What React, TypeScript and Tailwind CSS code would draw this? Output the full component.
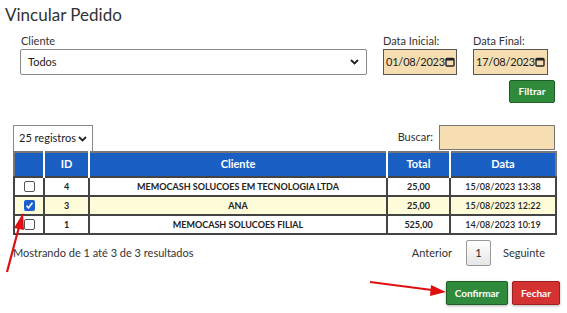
import React from "react";

const rows = [
  { id: 4, cliente: "MEMOCASH SOLUCOES EM TECNOLOGIA LTDA", total: "25,00", data: "15/08/2023 13:38", checked: false },
  { id: 3, cliente: "ANA", total: "25,00", data: "15/08/2023 12:22", checked: true },
  { id: 1, cliente: "MEMOCASH SOLUCOES FILIAL", total: "525,00", data: "14/08/2023 10:19", checked: false },
];

function Chevron() {
  return (
    <svg width="9" height="6" viewBox="0 0 9 6" className="shrink-0">
      <path d="M1 1l3.5 3.5L8 1" stroke="#222" strokeWidth="1.8" fill="none" />
    </svg>
  );
}

function CalIcon() {
  return (
    <svg width="10" height="10" viewBox="0 0 10 10" className="shrink-0">
      <rect x="1" y="1.5" width="8" height="7.5" rx="1" stroke="#222" strokeWidth="1.4" fill="none" />
      <rect x="1" y="1.5" width="8" height="2" fill="#222" />
    </svg>
  );
}

function DateField({ label, value, width }: { label: string; value: string; width: string }) {
  return (
    <div className="flex flex-col">
      <span className="text-[11px] text-[#333] leading-[13px] mb-[2px]">{label}</span>
      <div className={`${width} h-[26px] bg-[#f6deb2] border border-[#555] flex items-center justify-between pl-[2px] pr-[3px] text-[11px] text-[#222] whitespace-nowrap`}>
        <span className="tracking-[-0.2px]">{value}</span>
        <CalIcon />
      </div>
    </div>
  );
}

function Box({ checked }: { checked: boolean }) {
  return checked ? (
    <span className="inline-flex w-[11px] h-[11px] bg-[#1a5fd0] rounded-[2px] items-center justify-center">
      <svg width="9" height="9" viewBox="0 0 9 9">
        <path d="M1.5 4.8l2 2 4-5" stroke="#fff" strokeWidth="1.6" fill="none" />
      </svg>
    </span>
  ) : (
    <span className="inline-block w-[11px] h-[11px] bg-white border border-[#555] rounded-[2px]" />
  );
}

export default function App() {
  return (
    <div className="relative w-[567px] h-[313px] bg-white overflow-hidden text-[#222]" style={{ fontFamily: "Lato, 'Noto Sans', sans-serif" }}>
      <h1 className="pl-[5px] pt-[4px] text-[17px] leading-[22px] text-[#333]">Vincular Pedido</h1>

      {/* filters */}
      <div className="flex items-end gap-[16px] ml-[20px] mt-[8px]">
        <div className="flex flex-col">
          <span className="text-[11px] text-[#333] leading-[13px] mb-[2px] pl-[1px]">Cliente</span>
          <div className="w-[347px] h-[26px] border border-[#888] rounded-[2px] flex items-center justify-between pl-[7px] pr-[7px] text-[11px]">
            <span>Todos</span>
            <Chevron />
          </div>
        </div>
        <DateField label="Data Inicial:" value="01/08/2023" width="w-[74px]" />
        <DateField label="Data Final:" value="17/08/2023" width="w-[75px]" />
      </div>

      <div className="flex justify-end pr-[12px] mt-[5px]">
        <button className="w-[46px] h-[23px] bg-[#2f8a3c] border border-[#1e5e27] rounded-[2px] text-white text-[10px] font-bold">Filtrar</button>
      </div>

      {/* controls */}
      <div className="flex items-end justify-between ml-[13px] mr-[12px] mt-[22px]">
        <div className="w-[80px] h-[26px] border border-[#888] border-b-0 flex items-center justify-between px-[5px] text-[11px] whitespace-nowrap">
          <span>25 registros</span>
          <Chevron />
        </div>
        <div className="flex items-center gap-[6px] mb-[1px]">
          <span className="text-[11px] text-[#333]">Buscar:</span>
          <div className="w-[116px] h-[25px] bg-[#f6deb2] border border-[#777]" />
        </div>
      </div>

      {/* table */}
      <table className="ml-[13px] w-[544px] border-collapse border-2 border-[#777] text-[9px] font-bold">
        <thead>
          <tr className="bg-[#1a5fc4] text-white text-[11px] h-[25px]">
            <th className="w-[30px] border-r-2 border-white" />
            <th className="w-[45px] border-r-2 border-white">ID</th>
            <th className="w-[298px] border-r-2 border-white">Cliente</th>
            <th className="w-[63px] border-r-2 border-white">Total</th>
            <th>Data</th>
          </tr>
        </thead>
        <tbody>
          {rows.map((r) => (
            <tr key={r.id} className={`h-[19px] ${r.checked ? "bg-[#fdfbd8]" : "bg-white"}`}>
              <td className="border-2 border-[#444] text-center leading-[0]"><Box checked={r.checked} /></td>
              <td className="border-2 border-[#444] text-center">{r.id}</td>
              <td className="border-2 border-[#444] text-center">{r.cliente}</td>
              <td className="border-2 border-[#444] text-center">{r.total}</td>
              <td className="border-2 border-[#444] text-center font-semibold">{r.data}</td>
            </tr>
          ))}
        </tbody>
      </table>

      {/* footer */}
      <div className="flex items-center justify-between ml-[13px] mr-[22px] mt-[5px]">
        <span className="text-[11px] text-[#333]">Mostrando de 1 até 3 de 3 resultados</span>
        <div className="flex items-center text-[11px] text-[#333]">
          <span>Anterior</span>
          <span className="ml-[14px] mr-[12px] w-[25px] h-[26px] border border-[#999] rounded-[2px] bg-gradient-to-b from-white to-[#e6e6e6] flex items-center justify-center text-[#222]">1</span>
          <span>Seguinte</span>
        </div>
      </div>

      {/* actions */}
      <div className="flex justify-end gap-[4px] mr-[7px] mt-[15px]">
        <button className="w-[62px] h-[24px] bg-[#2f8a3c] border border-[#1e5e27] rounded-[2px] text-white text-[10px] font-bold shadow-[0_1px_3px_rgba(0,0,0,0.3)]">Confirmar</button>
        <button className="w-[48px] h-[24px] bg-[#d43131] border border-[#9e2020] rounded-[2px] text-white text-[10px] font-bold shadow-[0_1px_3px_rgba(0,0,0,0.3)]">Fechar</button>
      </div>

      {/* annotation arrows */}
      <svg className="absolute left-0 top-0 pointer-events-none" width="567" height="313">
        <line x1="7" y1="272" x2="19" y2="227" stroke="#e01010" strokeWidth="2.2" />
        <polygon points="23,213 14,228 24,230" fill="#e01010" />
        <line x1="370" y1="282" x2="432" y2="290" stroke="#e01010" strokeWidth="2.2" />
        <polygon points="446,292 431,285 430,296" fill="#e01010" />
      </svg>
    </div>
  );
}
